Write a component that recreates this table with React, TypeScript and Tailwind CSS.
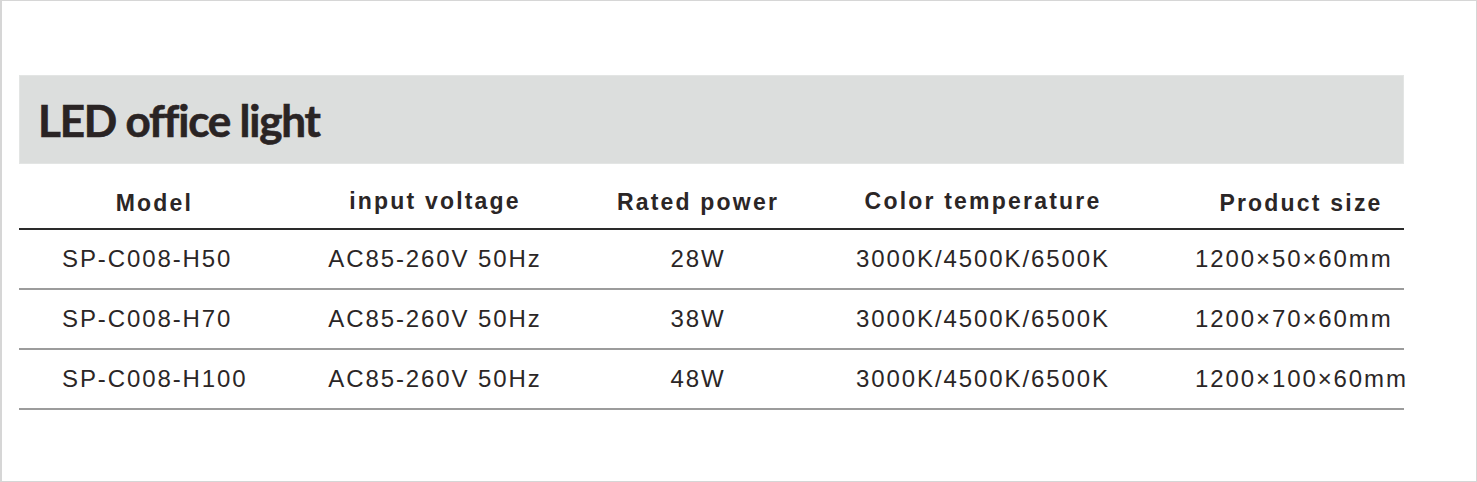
import React from 'react';

const rows = [
  { model: 'SP-C008-H50', voltage: 'AC85-260V 50Hz', power: '28W', temp: '3000K/4500K/6500K', size: '1200×50×60mm' },
  { model: 'SP-C008-H70', voltage: 'AC85-260V 50Hz', power: '38W', temp: '3000K/4500K/6500K', size: '1200×70×60mm' },
  { model: 'SP-C008-H100', voltage: 'AC85-260V 50Hz', power: '48W', temp: '3000K/4500K/6500K', size: '1200×100×60mm' },
];

const App = () => {
  return (
    <div className="w-[1477px] h-[482px] bg-white border border-l-2 border-[#d6d6d6] font-['Liberation_Sans',Arial,sans-serif] text-[#2b2626]">
      <div className="ml-[17px] mt-[74px] w-[1385px]">
        {/* title banner */}
        <div className="h-[89px] bg-[#dcdedd] border border-[#e3e5e4] flex items-center pl-[18px]">
          <h1 className="font-['Lato',sans-serif] font-bold text-[44px] tracking-[-1.2px] leading-none text-[#2a2424] [-webkit-text-stroke:0.6px_#2a2424]">
            LED office light
          </h1>
        </div>

        {/* header row */}
        <div className="grid grid-cols-[271px_290px_236px_334px_254px] h-[66px] border-b-2 border-[#2a2a2a] items-center text-[23px] font-bold tracking-[2.2px] leading-none">
          <div className="text-center mt-[15px]">Model</div>
          <div className="text-center mt-[10px]">input voltage</div>
          <div className="text-center mt-[13px]">Rated power</div>
          <div className="text-center mt-[10px]">Color temperature</div>
          <div className="text-center pl-[48px] mt-[15px]">Product size</div>
        </div>

        {/* data rows */}
        {rows.map((row, index) => (
          <div
            key={index}
            className="grid grid-cols-[271px_290px_236px_334px_254px] h-[60px] border-b-2 border-[#9c9c9c] items-center text-[24px] tracking-[1.9px] leading-none"
          >
            <div className="pl-[43px] whitespace-nowrap">{row.model}</div>
            <div className="text-center whitespace-nowrap">{row.voltage}</div>
            <div className="text-center whitespace-nowrap">{row.power}</div>
            <div className="text-center whitespace-nowrap">{row.temp}</div>
            <div className="pl-[45px] whitespace-nowrap">{row.size}</div>
          </div>
        ))}
      </div>
    </div>
  );
};

export default App;
